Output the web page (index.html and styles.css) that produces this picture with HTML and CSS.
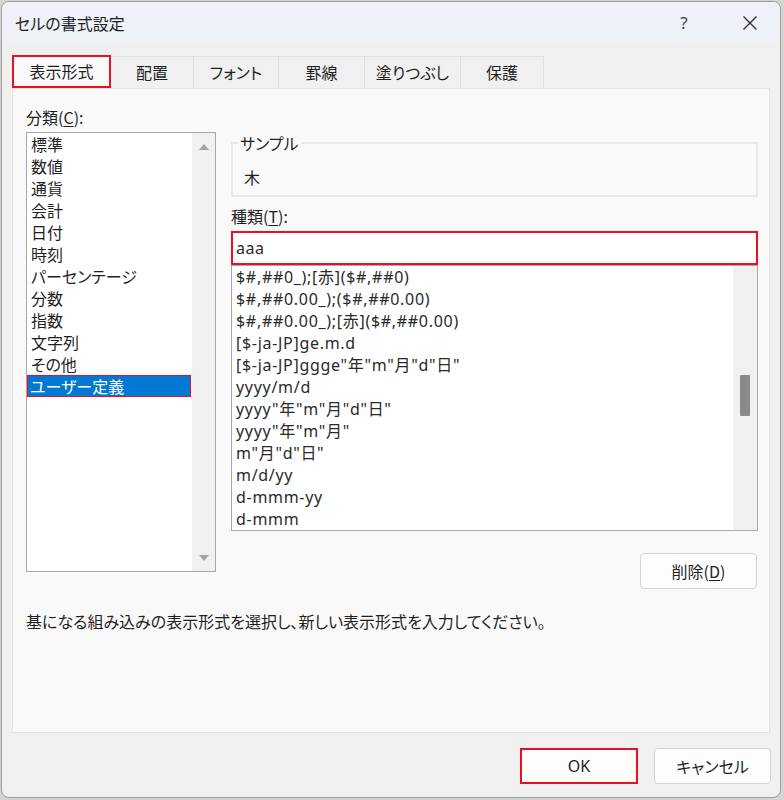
FILE: index.html
```html
<!DOCTYPE html>
<html lang="ja">
<head>
<meta charset="utf-8">
<title>セルの書式設定</title>
<link rel="stylesheet" href="styles.css">
</head>
<body>
<div class="window">
  <div class="titlebar">
    <span class="title">セルの書式設定</span>
    <div class="tb-actions">
      <span class="help">?</span>
      <span class="close">
        <svg width="16" height="16" viewBox="0 0 16 16"><path d="M1.5 1.5 L14.5 14.5 M14.5 1.5 L1.5 14.5" stroke="#2b2b2b" stroke-width="1.3" fill="none"/></svg>
      </span>
    </div>
  </div>
  <div class="content">
    <div class="tabs">
      <div class="tab tab-format active">表示形式</div>
      <div class="tab tab-align">配置</div>
      <div class="tab tab-font">フォント</div>
      <div class="tab tab-border">罫線</div>
      <div class="tab tab-fill">塗りつぶし</div>
      <div class="tab tab-protect">保護</div>
    </div>
    <div class="panel">
      <div class="panel-grid">
        <div class="col-left">
          <div class="label">分類(<u>C</u>):</div>
          <div class="listbox cat">
            <ul class="items">
              <li>標準</li>
              <li>数値</li>
              <li>通貨</li>
              <li>会計</li>
              <li>日付</li>
              <li>時刻</li>
              <li>パーセンテージ</li>
              <li>分数</li>
              <li>指数</li>
              <li>文字列</li>
              <li>その他</li>
              <li class="selected">ユーザー定義</li>
            </ul>
            <div class="vscroll arrows"><span class="arrow up"></span><span class="arrow down"></span></div>
          </div>
        </div>
        <div class="col-right">
          <fieldset class="sample">
            <legend>サンプル</legend>
            <div class="sample-value">木</div>
          </fieldset>
          <div class="label label-type">種類(<u>T</u>):</div>
          <div class="input">aaa</div>
          <div class="listbox formats">
            <ul class="items latin">
              <li>$#,##0_);[赤]($#,##0)</li>
              <li>$#,##0.00_);($#,##0.00)</li>
              <li>$#,##0.00_);[赤]($#,##0.00)</li>
              <li>[$-ja-JP]ge.m.d</li>
              <li>[$-ja-JP]ggge"年"m"月"d"日"</li>
              <li>yyyy/m/d</li>
              <li>yyyy"年"m"月"d"日"</li>
              <li>yyyy"年"m"月"</li>
              <li>m"月"d"日"</li>
              <li>m/d/yy</li>
              <li>d-mmm-yy</li>
              <li>d-mmm</li>
            </ul>
            <div class="vscroll"><span class="thumb"></span></div>
          </div>
          <div class="delete-row"><button class="btn">削除(<u>D</u>)</button></div>
        </div>
      </div>
      <p class="desc">基になる組み込みの表示形式を選択し、新しい表示形式を入力してください。</p>
    </div>
    <div class="footer">
      <button class="btn ok">OK</button>
      <button class="btn">キャンセル</button>
    </div>
  </div>
</div>
</body>
</html>
```
FILE: styles.css
```css
* { box-sizing: border-box; }
html, body { margin: 0; }
body {
  width: 784px;
  height: 800px;
  overflow: hidden;
  background: #d4d4d4;
  padding: 1px 0 0 1px;
  font-family: "Noto Sans CJK JP", "Noto Sans", sans-serif;
  font-size: 16px;
  font-feature-settings: "palt";
  color: #1f1f1f;
}
.window {
  width: 780px;
  height: 797px;
  border: 1px solid #9c9c9c;
  border-radius: 8px;
  background: #f0f0f0;
  display: flex;
  flex-direction: column;
  overflow: hidden;
}
.titlebar {
  height: 42px;
  flex: none;
  background: #eef2f8;
  display: flex;
  align-items: center;
  padding: 0 7px 0 13px;
}
.title { font-size: 16px; line-height: 20px; }
.tb-actions { margin-left: auto; display: flex; align-items: center; gap: 20px; }
.help {
  width: 46px;
  text-align: center;
  font-family: "Noto Sans", sans-serif;
  font-size: 17px;
  color: #444;
  line-height: 20px;
}
.close { width: 46px; height: 20px; display: flex; align-items: center; justify-content: center; }

.content {
  flex: 1;
  display: flex;
  flex-direction: column;
  padding: 11px 10px 0 10px;
}
.tabs { display: flex; align-items: flex-end; height: 33px; flex: none; }
.tab {
  height: 32px;
  border: 1px solid #e1e1e1;
  border-bottom: none;
  margin-right: -1px;
  text-align: center;
  line-height: 31px;
  background: #f0f0f0;
  white-space: nowrap;
}
.tab.active {
  height: 33px;
  border: 2px solid #e81123;
  background: #f9f9f9;
  line-height: 29px;
  position: relative;
  z-index: 1;
}
.tab-format { width: 99px; }
.tab-align { width: 84px; }
.tab-font { width: 86px; }
.tab-border { width: 87px; }
.tab-fill { width: 97px; }
.tab-protect { width: 84px; }

.panel {
  height: 645px;
  flex: none;
  border: 1px solid #e4e4e4;
  background: #f9f9f9;
  padding: 17px 11px 0 13px;
}
.panel-grid {
  display: grid;
  grid-template-columns: 190px 527px;
  column-gap: 15px;
  align-items: start;
}
.label { line-height: 22px; height: 22px; white-space: nowrap; }
.label u, .btn u { text-underline-offset: 2px; }

.listbox {
  border: 1px solid #a8a8a8;
  background: #fff;
  display: flex;
  overflow: hidden;
}
.cat { height: 440px; margin-top: 4px; }
.items { list-style: none; margin: 0; padding: 0; flex: 1; min-width: 0; }
.items li { height: 22px; line-height: 22px; padding-left: 4px; white-space: nowrap; }
.items li.selected {
  background: #0078d4;
  color: #fff;
  box-shadow: inset 0 0 0 1px #e81123;
  margin-right: 1px;
  padding-left: 3px;
}
.latin { font-family: "Noto Sans", "Noto Sans CJK JP", sans-serif; letter-spacing: 0.7px; color: #2a2a2a; }

.vscroll { width: 24px; flex: none; background: #f0f0f0; display: flex; flex-direction: column; align-items: center; }
.arrows { width: 23px; justify-content: space-between; padding: 11px 0 10px; }
.arrow { width: 0; height: 0; border-left: 5px solid transparent; border-right: 5px solid transparent; }
.arrow.up { border-bottom: 6px solid #a3a3a3; }
.arrow.down { border-top: 6px solid #a3a3a3; }
.thumb { width: 10px; height: 41px; margin-top: 109px; background: #8a8a8a; border-radius: 1px; }

.sample {
  margin: 27px 0 0;
  padding: 13px 12px 7px 11px;
  border: 2px solid #e8e8e8;
  min-width: 0;
}
.sample legend {
  padding: 0 2px;
  margin-left: -6px;
  line-height: 20px;
}
.sample-value { line-height: 22px; }
.label-type { margin-top: 8px; }
.input {
  height: 34px;
  margin-top: 4px;
  border: 2px solid #e81123;
  background: #fff;
  padding-left: 3px;
  line-height: 30px;
  font-family: "Noto Sans", sans-serif;
  letter-spacing: 0.5px;
  color: #2a2a2a;
}
.formats { height: 266px; }
.delete-row { display: flex; justify-content: flex-end; margin-top: 22px; padding-right: 1px; }

.btn {
  height: 36px;
  width: 117px;
  background: #fdfdfd;
  border: 1px solid #d3d3d3;
  border-radius: 4px;
  font: inherit;
  font-feature-settings: "palt";
  color: #1f1f1f;
  padding: 0;
  line-height: 20px;
}
.desc { margin: 21px 0 0; line-height: 22px; white-space: nowrap; }
.footer { display: flex; justify-content: flex-end; gap: 16px; margin: 15px -1px 0 0; }
.btn.ok {
  width: 118px;
  border: 2px solid #e81123;
  border-radius: 0;
  font-family: "Noto Sans", sans-serif;
}
```
